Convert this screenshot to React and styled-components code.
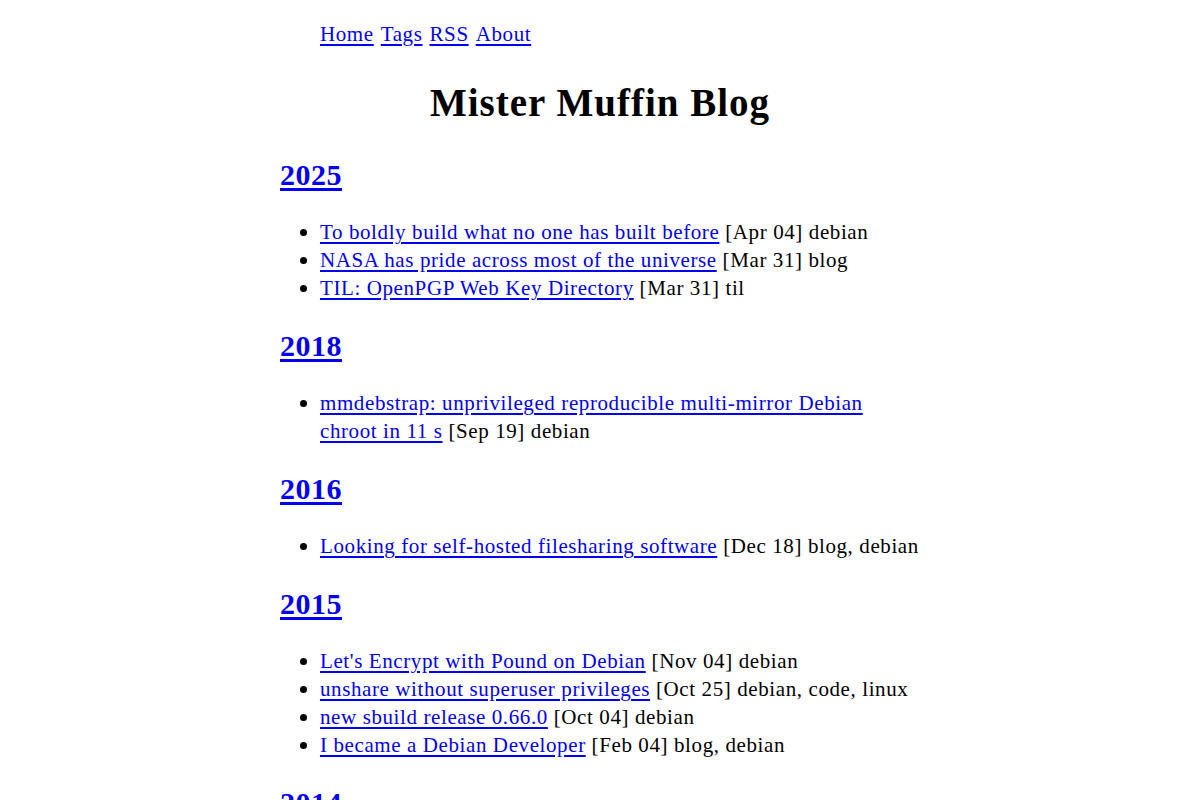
import React from 'react'
import styled, { createGlobalStyle } from 'styled-components'

const GlobalStyle = createGlobalStyle`
    body {
        margin: 0;
        background: #ffffff;
        color: #000000;
        font-family: "Liberation Serif", "DejaVu Serif", serif;
    }
`

const Page = styled.div`
    max-width: 640px;
    margin: 0 auto;
    font-size: 21px;
    letter-spacing: 0.6px;
    line-height: 28px;
`

const Nav = styled.ul`
    list-style: none;
    margin: 20px 0 0;
    padding-left: 40px;
    display: flex;
    gap: 7px;
`

const Link = styled.a`
    color: #0000ee;
    text-decoration: underline;
    text-underline-offset: 3px;
`

const Title = styled.h1`
    margin: 33px 0 32px;
    font-size: 39px;
    letter-spacing: 1px;
    line-height: 44px;
    text-align: center;
    font-weight: bold;
`

const Year = styled.h2`
    margin: 26px 0 25px;
    font-size: 30px;
    letter-spacing: 0.5px;
    line-height: 36px;
    font-weight: bold;
`

const Posts = styled.ul`
    margin: 0;
    padding-left: 40px;
`

const Post = styled.li`
    &::marker {
        font-size: 22px;
    }
`

const archive = [
    { year: '2025', posts: [
        ['To boldly build what no one has built before', 'Apr 04', 'debian'],
        ['NASA has pride across most of the universe', 'Mar 31', 'blog'],
        ['TIL: OpenPGP Web Key Directory', 'Mar 31', 'til'],
    ] },
    { year: '2018', posts: [
        ['mmdebstrap: unprivileged reproducible multi-mirror Debian chroot in 11 s', 'Sep 19', 'debian'],
    ] },
    { year: '2016', posts: [
        ['Looking for self-hosted filesharing software', 'Dec 18', 'blog, debian'],
    ] },
    { year: '2015', posts: [
        ["Let's Encrypt with Pound on Debian", 'Nov 04', 'debian'],
        ['unshare without superuser privileges', 'Oct 25', 'debian, code, linux'],
        ['new sbuild release 0.66.0', 'Oct 04', 'debian'],
        ['I became a Debian Developer', 'Feb 04', 'blog, debian'],
    ] },
    { year: '2014', posts: [
        ['A new Debian package', 'Dec 01', 'debian'],
    ] },
]

const App = () => (
    <Page>
        <GlobalStyle />
        <Nav>
            <li><Link href="#">Home</Link></li>
            <li><Link href="#">Tags</Link></li>
            <li><Link href="#">RSS</Link></li>
            <li><Link href="#">About</Link></li>
        </Nav>
        <Title>Mister Muffin Blog</Title>
        {archive.map(({ year, posts }) => (
            <section key={year}>
                <Year><Link href="#">{year}</Link></Year>
                <Posts>
                    {posts.map(([title, date, tags]) => (
                        <Post key={title}>
                            <Link href="#">{title}</Link> [{date}] {tags}
                        </Post>
                    ))}
                </Posts>
            </section>
        ))}
    </Page>
)

export default App
